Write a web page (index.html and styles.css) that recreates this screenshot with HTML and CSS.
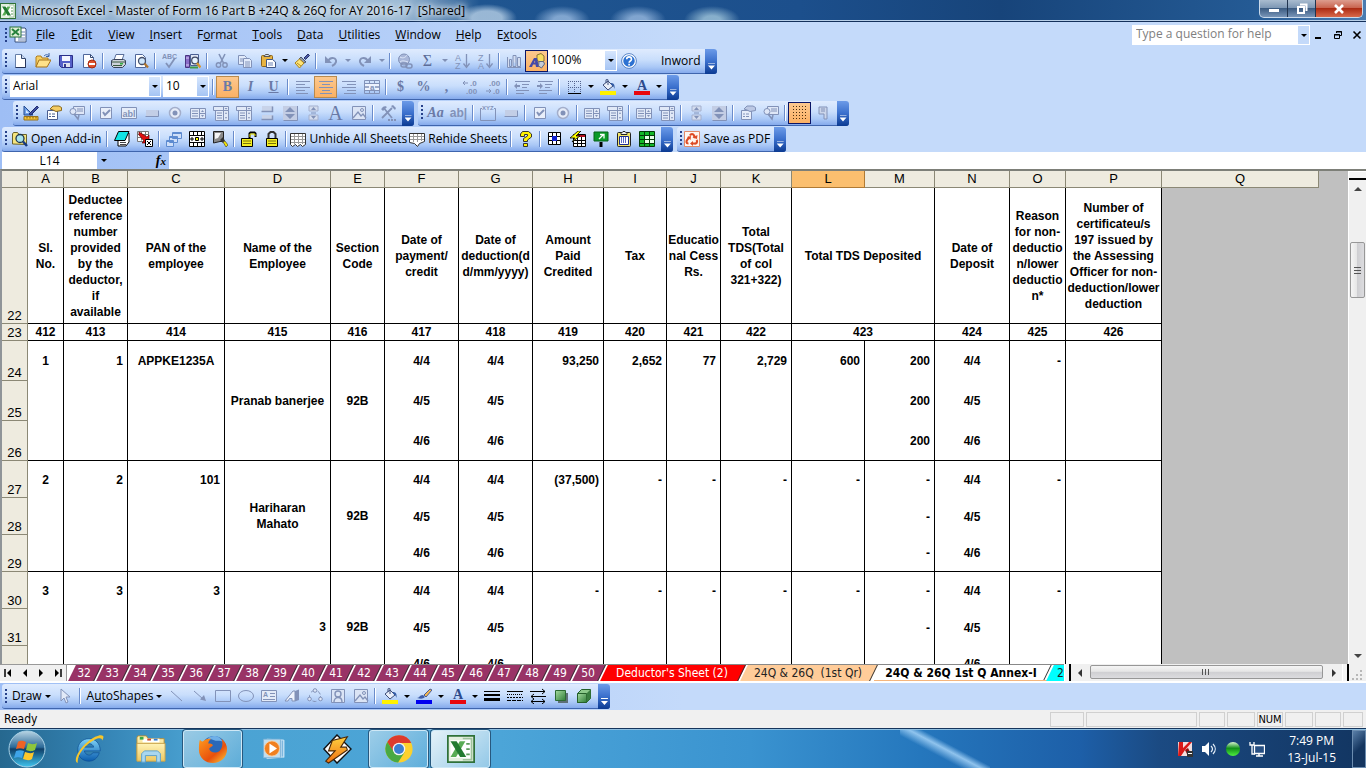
FILE: index.html
```
<!DOCTYPE html>
<html lang="en">
<head>
	<meta charset="utf-8" />
	<meta name="viewport" content="width=device-width, initial-scale=1" />
	<link rel="stylesheet" href="styles.css">
	<title>Microsoft Excel - Master of Form 16 Part B +24Q &amp; 26Q for AY 2016-17</title>
</head>
<body>
<!-- gradients -->
<svg class="grads" aria-hidden="true">
	<defs>
		<linearGradient id="g-ball" x1="0" y1="0" x2="0" y2="1"><stop offset="0" stop-color="#b8d4e4"/><stop offset=".45" stop-color="#2c6a98"/><stop offset=".5" stop-color="#0f3f68"/><stop offset="1" stop-color="#3fc4ee"/></linearGradient>
		<linearGradient id="g-fold" x1="0" y1="0" x2="0" y2="1"><stop offset="0" stop-color="#fff3b8"/><stop offset="1" stop-color="#eec860"/></linearGradient>
		<linearGradient id="g-green" x1="0" y1="0" x2="1" y2="1"><stop offset="0" stop-color="#a6dca0"/><stop offset="1" stop-color="#2f7d38"/></linearGradient>
		<linearGradient id="g-fox" x1="0" y1="0" x2="1" y2="1"><stop offset="0" stop-color="#ff9a1e"/><stop offset=".6" stop-color="#e8500c"/><stop offset="1" stop-color="#ffcf3a"/></linearGradient>
		<linearGradient id="g-ie" x1="0" y1="0" x2="0" y2="1"><stop offset="0" stop-color="#7fd4f8"/><stop offset="1" stop-color="#0a5cae"/></linearGradient>
		<linearGradient id="g-bolt" x1="0" y1="0" x2="0" y2="1"><stop offset="0" stop-color="#ffd040"/><stop offset="1" stop-color="#f07010"/></linearGradient>
		<linearGradient id="g-dot" x1="0" y1="0" x2="0" y2="1"><stop offset="0" stop-color="#d8f4d0"/><stop offset=".45" stop-color="#109018"/><stop offset="1" stop-color="#50f040"/></linearGradient>
	</defs>
</svg>
<!-- icon sprite -->
<svg class="sprite" aria-hidden="true">
	<symbol id="xl" viewBox="0 0 16 16"><rect x=".5" y=".5" width="15" height="15" fill="#e4efdf" stroke="#2f7138"/><path d="M9 2h5v12H9" fill="#fff" stroke="#9fc39d"/><path d="M10 5h3M10 8h3M10 11h3" stroke="#5d9c5c"/><rect x="2" y="3" width="9" height="10" fill="#fff"/><path d="M10.500 3.500H7.300L2 12.500h3.200z" fill="#5aac55"/><path d="M2 3.500h3.500l5.500 9H7.500z" fill="#237a31"/></symbol>
	<symbol id="xldoc" viewBox="0 0 18 18"><path d="M7 2h9l1 1v13H6V3z" fill="#fff" stroke="#39507d"/><path d="M12 6h4M12 9h4M9 12h7M9 14h7" stroke="#6b84b5"/><rect x="1" y="1" width="11" height="10" fill="#dff0d8" stroke="#28733a"/><path d="M3 3l7 6M10 3L3 9" stroke="#26823b" stroke-width="2"/></symbol>
	<symbol id="new" viewBox="0 0 16 16"><path d="M3.500 1.500h6l4 4v9h-10z" fill="#fff" stroke="#667fa8"/><path d="M9.500 1.500v4h4" fill="#cfdcf2" stroke="#33476e"/><path d="M13.500 6v8.500h-10" fill="none" stroke="#26355c"/></symbol>
	<symbol id="open" viewBox="0 0 16 16"><path d="M1 14V4l1-1h4l1 2h6v3" fill="#f5cf63" stroke="#b17d1c"/><path d="M1 14l3-7h12l-4 7z" fill="#ffe28a" stroke="#a5721a"/><path d="M9 3c2-2 4-1.500 5 0M14 0v3.500h-3" fill="none" stroke="#3a62a8"/></symbol>
	<symbol id="save" viewBox="0 0 16 16"><path d="M1.500 2.500h13v12h-11l-2-2z" fill="#5560c8" stroke="#2b2f88"/><rect x="4" y="3" width="8" height="5" fill="#f4f6ff"/><rect x="5" y="10" width="7" height="4" fill="#e0e3ee"/><rect x="6" y="11" width="2" height="3" fill="#333a8f"/></symbol>
	<symbol id="perm" viewBox="0 0 16 16"><path d="M2.500 1.500h7l3 3v10h-10z" fill="#fff" stroke="#4f679a"/><path d="M9.500 1.500v3h3" fill="none" stroke="#33476e"/><circle cx="11" cy="11" r="4" fill="#e0522c" stroke="#a52b10"/><rect x="8" y="10" width="6" height="2" fill="#fff"/></symbol>
	<symbol id="print" viewBox="0 0 16 16"><path d="M4 7l2-5.500h8L12 7" fill="#fff" stroke="#5a6f9a"/><path d="M1.500 7.500l2-1h10l2 1v4l-3 3h-9l-2-2z" fill="#cdd2da" stroke="#39435a"/><path d="M2 9h13M3 12.500h9" stroke="#3a5a40"/><rect x="10" y="10" width="3" height="1.500" fill="#37b043"/></symbol>
	<symbol id="preview" viewBox="0 0 16 16"><path d="M2.500 1.500h7l3 3v10h-10z" fill="#fff" stroke="#4f679a"/><circle cx="9" cy="8" r="3.500" fill="#cfe6fb" stroke="#44506c" stroke-width="1.300"/><path d="M11.500 10.500l3.500 4" stroke="#b0752d" stroke-width="2.200"/></symbol>
	<symbol id="spell" viewBox="0 0 16 16"><text x="0" y="6" font-size="7" font-weight="bold" fill="currentColor">ABC</text><path d="M4 10l3 4 6-9" fill="none" stroke="currentColor" stroke-width="1.800"/></symbol>
	<symbol id="research" viewBox="0 0 16 16"><path d="M5.500 1.500h8v11h-8z" fill="#dfe6f4" stroke="#4a5f92"/><path d="M.5 2.500h4v12h-4z" fill="#8a6cc8" stroke="#493580"/><path d="M1 5h3M1 12h3" stroke="#d8ccf2"/><path d="M5 14.500h8" stroke="#3f9a48" stroke-width="2"/><circle cx="10" cy="7.500" r="3.300" fill="#e8f4ff" stroke="#3f4862" stroke-width="1.200"/><path d="M12 10l3.500 4.500" stroke="#d8962c" stroke-width="2.400"/></symbol>
	<symbol id="cut" viewBox="0 0 16 16"><path d="M5 1l4.500 9M11 1L6.500 10" stroke="currentColor" stroke-width="1.600"/><circle cx="4.500" cy="12" r="2.200" fill="none" stroke="currentColor" stroke-width="1.400"/><circle cx="11" cy="12" r="2.200" fill="none" stroke="currentColor" stroke-width="1.400"/></symbol>
	<symbol id="copy" viewBox="0 0 16 16"><path d="M1.500 2.500h6l2 2v7h-8z" fill="#e2ebfb" stroke="currentColor"/><path d="M6.500 5.500h6l2 2v7h-8z" fill="#e2ebfb" stroke="currentColor"/><path d="M3 6h3M3 8h3M8 9h5M8 11h5M8 13h5" stroke="currentColor"/></symbol>
	<symbol id="paste" viewBox="0 0 16 16"><rect x="1.500" y="2.500" width="11" height="11" rx="1" fill="#e8b442" stroke="#8a641c"/><path d="M4 3.500l1.500-2h3l1.500 2z" fill="#dfe3ea" stroke="#555"/><path d="M6.500 6.500h6l3 2.500v5.500h-9z" fill="#fff" stroke="#3f5686"/><path d="M8 10h5M8 12h5" stroke="#6b82b5"/></symbol>
	<symbol id="brush" viewBox="0 0 16 16"><path d="M10 5l4-4 1.500 1.500-4 4z" fill="#4a5aa8" stroke="#2a3266"/><path d="M7 4l5 5-2 1-5-4z" fill="#8d96a8" stroke="#4b5366"/><path d="M5.500 6l4.500 4-4.500 5L1 10z" fill="#ffe477" stroke="#a8821b"/><path d="M3 10l4 3" stroke="#b58f22"/></symbol>
	<symbol id="undo" viewBox="0 0 16 16"><path d="M5 8c3-5 9-3 8 1-.5 2-2 3-4 4" fill="none" stroke="currentColor" stroke-width="2"/><path d="M2 3v7h7z" fill="currentColor"/></symbol>
	<symbol id="redo" viewBox="0 0 16 16"><path d="M11 8C8 3 2 5 3 9c.5 2 2 3 4 4" fill="none" stroke="currentColor" stroke-width="2"/><path d="M14 3v7H7z" fill="currentColor"/></symbol>
	<symbol id="link" viewBox="0 0 16 16"><circle cx="7" cy="6.500" r="5.500" fill="#a9b7d9" stroke="currentColor"/><path d="M3 4c3 2 6 0 7-2M3 9c2-2 5-1 8 0" fill="none" stroke="#dfe8fa"/><rect x="4" y="10" width="6" height="4" rx="2" fill="none" stroke="currentColor" stroke-width="1.500"/><rect x="9" y="11" width="6" height="4" rx="2" fill="none" stroke="currentColor" stroke-width="1.500"/></symbol>
	<symbol id="az" viewBox="0 0 16 16"><text x="1" y="8" font-size="9" fill="currentColor">A</text><text x="1" y="16" font-size="9" fill="currentColor">Z</text><path d="M12.500 1v12M9.500 10.500l3 4 3-4" fill="none" stroke="currentColor" stroke-width="1.300"/></symbol>
	<symbol id="za" viewBox="0 0 16 16"><text x="1" y="8" font-size="9" fill="currentColor">Z</text><text x="1" y="16" font-size="9" fill="currentColor">A</text><path d="M12.500 1v12M9.500 10.500l3 4 3-4" fill="none" stroke="currentColor" stroke-width="1.300"/></symbol>
	<symbol id="chart" viewBox="0 0 16 16"><path d="M1.500 4v10.500H15M3.500 6.500h2v7h-2zM7 2.500h3v11H7zM11.500 4.500h3v9h-3z" fill="#d4def2" stroke="currentColor"/></symbol>
	<symbol id="shapes" viewBox="0 0 16 16"><path d="M8 2l4-1.500L15 3v5l-4 1.500L8 7z" fill="#f8de60" stroke="#8a7430"/><path d="M0 14L5 5h3l2 9H7l-.5-2.500H4L3 14zM5 9.500h1.200L6 7.500z" fill="#4549a8"/><path d="M10 8.500h4.500l1 2.500-3 4-3-2z" fill="#c6ccd8" stroke="#5d6680"/></symbol>
	<symbol id="help" viewBox="0 0 16 16"><circle cx="8" cy="8" r="6.500" fill="#2d72d2" stroke="#fff" stroke-width="1.500"/><circle cx="8" cy="8" r="7.400" fill="none" stroke="#3b6dba" stroke-width=".8"/><path d="M5.700 6.300c0-3.200 4.800-3.200 4.800 0 0 1.700-2.400 1.700-2.400 3.500M8.100 10.800v1.700" fill="none" stroke="#fff" stroke-width="1.600"/></symbol>
	<symbol id="al" viewBox="0 0 16 16"><path d="M1 2.500h14M1 5.500h9M1 8.500h14M1 11.500h9M1 14.500h12" stroke="currentColor"/></symbol>
	<symbol id="ac" viewBox="0 0 16 16"><path d="M1 2.500h14M4 5.500h8M1 8.500h14M4 11.500h8M2 14.500h12" stroke="currentColor"/></symbol>
	<symbol id="ar" viewBox="0 0 16 16"><path d="M1 2.500h14M6 5.500h9M1 8.500h14M6 11.500h9M3 14.500h12" stroke="currentColor"/></symbol>
	<symbol id="merge" viewBox="0 0 16 16"><path d="M.5 1.500h15v13H.5zM.5 4.500h15M.5 11.500h15M5.500 1.500v3M10.500 1.500v3M5.500 11.500v3M10.500 11.500v3" fill="none" stroke="currentColor"/><path d="M1 5h14v6H1z" fill="#eef3fd"/><text x="6" y="10.500" font-size="8" font-weight="bold" fill="currentColor">a</text><path d="M1 8h4M11 8h4" stroke="currentColor" stroke-width="1.500"/></symbol>
	<symbol id="incdec" viewBox="0 0 16 16"><text x="8" y="7" font-size="8" font-weight="bold" fill="currentColor">.0</text><text x="4" y="15" font-size="8" font-weight="bold" fill="currentColor">.00</text><path d="M1 4h5M3 2L1 4l2 2" fill="none" stroke="currentColor"/></symbol>
	<symbol id="decdec" viewBox="0 0 16 16"><text x="4" y="7" font-size="8" font-weight="bold" fill="currentColor">.00</text><text x="8" y="15" font-size="8" font-weight="bold" fill="currentColor">.0</text><path d="M1 12h5M4 10l2 2-2 2" fill="none" stroke="currentColor"/></symbol>
	<symbol id="outd" viewBox="0 0 16 16"><path d="M1 2.500h15M8 5.500h7M8 8.500h5M2 11.500h13M2 14.500h8" stroke="currentColor"/><path d="M0 7l3-3v2h3v2H3v2z" fill="currentColor"/></symbol>
	<symbol id="ind" viewBox="0 0 16 16"><path d="M1 2.500h15M8 5.500h7M8 8.500h5M2 11.500h13M2 14.500h8" stroke="currentColor"/><path d="M6 7L3 4v2H0v2h3v2z" fill="currentColor"/></symbol>
	<symbol id="border" viewBox="0 0 16 16"><path d="M2.500 2v12M8.500 2v12M14.500 2v12M2 2.500h13M2 8.500h13" stroke="#54648f" stroke-dasharray="1 1"/><path d="M2 14.500h13" stroke="#000"/></symbol>
	<symbol id="fill" viewBox="0 0 16 16"><path d="M3 6l5-4 5 5-5 4z" fill="#e9eff9" stroke="#3d4d78"/><path d="M8 6V1c0-1-2-1-2 0v3" fill="none" stroke="#3d4d78"/><path d="M11 4c3 0 4 2 3.500 6-1-3-2-4-3.500-4z" fill="#365fa8"/><path d="M0 12h16v4H0z" fill="#fff200"/></symbol>
	<symbol id="fcolor" viewBox="0 0 16 16"><text x="8" y="11" text-anchor="middle" font-family="Liberation Serif" font-size="14" font-weight="bold" fill="#2d4a8c">A</text><path d="M0 12h16v4H0z" fill="#e8060e"/></symbol>
	<symbol id="lcolor" viewBox="0 0 16 16"><path d="M1 10c3 0 2-3 6-3l2 2c-2 2-4 2-8 1z" fill="#3f5ea8"/><path d="M8 7l6-6 2 1-6 7z" fill="#f3b74e" stroke="#4a5a90"/><path d="M0 12h16v4H0z" fill="#0000f0"/></symbol>
	<symbol id="design" viewBox="0 0 16 16"><path d="M1 1v9h9z" fill="#6fa0e8" stroke="#244a90"/><path d="M3 5v3h3z" fill="#dcebff"/><path d="M1 11.500h14v3.500H1z" fill="#f6c437" stroke="#96701a"/><path d="M4 12v1.500M7 12v1.500M10 12v1.500M13 12v1.500" stroke="#7b5a12"/><path d="M6 9l8-8 1.500 1.500L8 10z" fill="#3b4ca0" stroke="#252f6e"/></symbol>
	<symbol id="prop" viewBox="0 0 16 16"><path d="M1.500 5.500h10v9h-10z" fill="#fff" stroke="#4b5e90"/><path d="M3 9h2M6 9h3M3 11.500h2M6 11.500h3" stroke="#4b5e90"/><path d="M4 4l3-3h6l2.500 1.500v3L10 6.500 7 5z" fill="#f5cc62" stroke="#8a6a22"/></symbol>
	<symbol id="propoff" viewBox="0 0 16 16"><path d="M1.500 5.500h10v9h-10z" fill="#e7edf9" stroke="currentColor"/><path d="M3 9h2M6 9h3M3 11.500h2M6 11.500h3" stroke="currentColor"/><path d="M4 4l3-3h6l2.500 1.500v3L10 6.500 7 5z" fill="#bcc8e4" stroke="currentColor"/></symbol>
	<symbol id="code" viewBox="0 0 16 16"><path d="M4.500 1.500h11v8h-11z" fill="#dfe7f7" stroke="currentColor"/><path d="M8 4h6M8 6h6" stroke="currentColor"/><circle cx="4" cy="6.500" r="3" fill="#dfe7f7" stroke="currentColor"/><path d="M5 9l4 5 1-4" fill="none" stroke="currentColor" stroke-width="1.500"/></symbol>
	<symbol id="check" viewBox="0 0 16 16"><path d="M2.500 2.500h11v11h-11z" fill="#e9effa" stroke="currentColor"/><path d="M5 7l2 3 5-5" fill="none" stroke="currentColor" stroke-width="2"/></symbol>
	<symbol id="abl" viewBox="0 0 16 16"><path d="M.5 2.500h15v11H.5z" fill="#e6edf9" stroke="currentColor"/><text x="1.500" y="11.500" font-size="9" font-weight="bold" fill="currentColor">abl</text></symbol>
	<symbol id="cmd" viewBox="0 0 16 16"><path d="M2 5h12v6H2z" fill="#c3cee6"/><path d="M1.500 11.500h13v-6" fill="none" stroke="currentColor"/></symbol>
	<symbol id="radio" viewBox="0 0 16 16"><circle cx="8" cy="8" r="5.500" fill="#e6ecf8" stroke="#a3aecb" stroke-width="1.500"/><circle cx="8" cy="8" r="2.500" fill="currentColor"/></symbol>
	<symbol id="list" viewBox="0 0 16 16"><path d="M.5 3.500h15v10H.5zM9.500 3.500v10M9.500 8.500h6" fill="#e1e9f7" stroke="currentColor"/><path d="M2 6h6M2 8.500h6M2 11h6" stroke="currentColor"/><path d="M11 7l1.500-2L14 7zM11 10l1.500 2 1.500-2z" fill="currentColor"/></symbol>
	<symbol id="combo" viewBox="0 0 16 16"><path d="M.5 1.500h15v4H.5zM2.500 5.500h13v10h-13zM10.500 5.500v10M10.500 1.500v4" fill="#e1e9f7" stroke="currentColor"/><path d="M4 8h5M4 10.500h5M4 13h5" stroke="currentColor"/><path d="M11.500 3h3L13 4.500zM12 9l1-2 1 2zM12 12l1 2 1-2z" fill="currentColor"/></symbol>
	<symbol id="toggle" viewBox="0 0 16 16"><path d="M3 1h11v5H3zM3 10h11v4H3z" fill="#c8d3e9"/><path d="M2.500 6.500h11v-5M2.500 14.500h11v-4" fill="none" stroke="currentColor" stroke-width="1.500"/></symbol>
	<symbol id="spin" viewBox="0 0 16 16"><path d="M1 1h14v14H1z" fill="#c3cde4"/><path d="M8 2l5 5H3zM8 14l5-5H3z" fill="currentColor"/><path d="M1.500 15.500h14V1" stroke="currentColor" fill="none"/></symbol>
	<symbol id="scroll" viewBox="0 0 16 16"><path d="M4 1h9v5H4zM4 10h9v5H4z" fill="#d3dcee" stroke="#a4b0ce"/><path d="M8.500 2l2.500 3H6zM8.500 14l2.500-3H6z" fill="currentColor"/><path d="M6 8h5" stroke="currentColor"/></symbol>
	<symbol id="pic" viewBox="0 0 16 16"><path d="M1.500 1.500h13v13h-13z" fill="#dbe4f5" stroke="currentColor"/><path d="M2 13l5-6 3 4 2-2 3 4" fill="none" stroke="currentColor" stroke-width="1.300"/><circle cx="11" cy="5" r="1.500" fill="none" stroke="currentColor"/></symbol>
	<symbol id="tools" viewBox="0 0 16 16"><path d="M2 13L12 3M3 2l9 11" fill="none" stroke="currentColor" stroke-width="1.800"/><path d="M1 4l4-3 2 1-4 4zM11 1l4 4 1-2-3-3z" fill="currentColor"/><path d="M8 15h2M11 15h2M14 15h2" stroke="currentColor" stroke-width="2"/></symbol>
	<symbol id="xyz" viewBox="0 0 16 16"><path d="M2 3.500H.5v12h15v-12H14" fill="none" stroke="currentColor"/><text x="2" y="5" font-size="6" font-weight="bold" fill="currentColor">XYZ</text></symbol>
	<symbol id="dots" viewBox="0 0 16 16"><path d="M1.500 1v14M4.500 1v14M7.500 1v14M10.500 1v14M13.500 1v14" stroke="#4a2f10" stroke-dasharray="1 2"/></symbol>
	<symbol id="run" viewBox="0 0 16 16"><path d="M4 2h8v12H9V9H4z" fill="#cbd5ea" stroke="currentColor"/><path d="M6 4h4M6 6h4" stroke="currentColor"/></symbol>
	<symbol id="addin" viewBox="0 0 16 16"><path d="M.5 13V3l1-1.500h4L7 3.500h7.500v10z" fill="#f5e57e" stroke="#68622c"/><circle cx="8" cy="7.500" r="4" fill="#a8e4ee" stroke="#1f3550" stroke-width="1.300"/><path d="M11 10.500l4 4.500" stroke="#173a80" stroke-width="2.500"/></symbol>
	<symbol id="book" viewBox="0 0 16 16"><path d="M5 6l10-4v9l-3 4H4v-5z" fill="#fff" stroke="#000"/><path d="M6 11.500h6M6 13.500h6" stroke="#444"/><path d="M4.500.5h10.500L11 9.500H.5z" fill="#10e4e4" stroke="#000"/></symbol>
	<symbol id="goto" viewBox="0 0 16 16"><path d="M.5.500h11v10H.5zM4.500.5v9M8.500.5v9M.5 3.500h11M.5 6.500h11" fill="#fff" stroke="#777"/><path d="M2 1l8 5 2-2v8H5l2-2-5-6z" fill="#e01010" stroke="#600" stroke-width=".7"/><path d="M8.500 8.500h7v7h-7z" fill="#fff" stroke="#000"/><path d="M10 10l4 4M14 10l-4 4" stroke="#000"/></symbol>
	<symbol id="wins" viewBox="0 0 16 16"><path d="M6.500 1.500h9v6h-9zM3.500 5.500h8v6h-8zM.5 9.500h7v6h-7z" fill="#cfdff8" stroke="#5d8bd0"/><path d="M6 2.500h9M3 6.500h8M1 10.500h7" stroke="#5d8bd0"/></symbol>
	<symbol id="autofit" viewBox="0 0 16 16"><path d="M.5.5h15v15H.5zM.5 4.500h15M.5 11.500h15M4.500.5v4M8.500.5v4M12.500.5v4M4.500 11.500v4M8.500 11.500v4M12.500 11.500v4" fill="#fff" stroke="#000"/><path d="M6.500 6.500h3v3h-3z" fill="#ff0" stroke="#000"/><path d="M1 8h4M11 8h4M3 6v4M13 6v4" stroke="#000"/></symbol>
	<symbol id="torch" viewBox="0 0 16 16"><path d="M1.500.5h10v10H8L1.500 12z" fill="#8a8a8a" stroke="#222"/><path d="M3 2l6 0-3 5-3 1z" fill="#f4f4f4"/><path d="M8 9l3-3 2 4-2 2z" fill="#333"/><path d="M11 11l2-1 3 4-2 2z" fill="#f5e400" stroke="#333" stroke-width=".6"/></symbol>
	<symbol id="unlock" viewBox="0 0 16 16"><path d="M8.500 7V2.500l1-1h4l1 1V6" fill="none" stroke="#000" stroke-width="2"/><path d="M9 6V3h5v2" fill="none" stroke="#e8e200"/><path d="M.5 7.500h11v8H.5z" fill="#f4ee20" stroke="#000"/><path d="M2 10h8M2 12.500h8" stroke="#77720a"/></symbol>
	<symbol id="lock" viewBox="0 0 16 16"><path d="M4.500 7V3l2-2h3l2 2v4" fill="none" stroke="#333" stroke-width="2"/><path d="M2.500 7.500h11v8h-11z" fill="#f4ee20" stroke="#000"/><path d="M4 10h8M4 12.500h8" stroke="#77720a"/></symbol>
	<symbol id="sheet" viewBox="0 0 16 16"><path d="M.5 2.500h15v11l-3 2-2-2-3 2-2-2-3 2-2-2z" fill="#fff" stroke="#333"/><path d="M4.500 3v10M8.500 3v10M12.500 3v10M1 5.500h14M1 8.500h14M1 11.500h14" stroke="#999"/></symbol>
	<symbol id="sheet2" viewBox="0 0 16 16"><path d="M.5 2.500h15v8l-5 2-2 3-3-3-5-1z" fill="#fff" stroke="#333"/><path d="M4.500 3v8M8.500 3v8M12.500 3v7M1 5.500h14M1 8.500h14" stroke="#999"/></symbol>
	<symbol id="qm" viewBox="0 0 16 16"><path d="M2.500 5.500V3l2-2.500h6l3 2.500v3L9.500 9v1.500h-4v-3l4-2.500V3.500h-3v2z" fill="#fff200" stroke="#333"/><path d="M5.500 12.500h4v3h-4z" fill="#fff200" stroke="#333"/></symbol>
	<symbol id="cell" viewBox="0 0 16 16"><path d="M1.500 1.500h12v12h-12zM5.500 1.500v12M9.500 1.500v12M1.500 5.500h12M1.500 9.500h12" fill="#fff" stroke="#000"/><path d="M5 5h5v5H5z" fill="#1020d0"/></symbol>
	<symbol id="qgrid" viewBox="0 0 16 16"><path d="M3.500 3.500h12v12h-12z" fill="#fff" stroke="#000"/><path d="M4 4h11v2H4z" fill="#b01020"/><path d="M7.500 6v9M11.500 6v9M4 9.500h11M4 12.500h11" stroke="#000"/><path d="M8 0L0 7h5l-3 4 8-6H6l5-5z" fill="#ff0" stroke="#000" stroke-width=".8"/></symbol>
	<symbol id="sign" viewBox="0 0 16 16"><path d="M1 1h14v9H1z" fill="#0a9a28" stroke="#066018"/><path d="M6 8l4-4M7 3.500h4v4" stroke="#fff" fill="none" stroke-width="1.300"/><path d="M8 11v5" stroke="#000" stroke-width="3"/></symbol>
	<symbol id="clip" viewBox="0 0 16 16"><rect x="1.500" y="1.500" width="13" height="14" rx="1" fill="#f4e66a" stroke="#222"/><path d="M5 2.500L7 .5h2l2 2v1H5z" fill="#eee" stroke="#222"/><path d="M3.500 5.500h9v8h-9z" fill="#fff" stroke="#1a2a90"/><path d="M5 7h6M5 9h6M5 11h6" stroke="#2438b0" stroke-dasharray="1 1" stroke-width="1.500"/></symbol>
	<symbol id="ggrid" viewBox="0 0 16 16"><path d="M.5.5h15v15H.5z" fill="#12b828" stroke="#033a08"/><path d="M5.500 1v14M10.500 1v14M1 4.500h14M1 8.500h14M1 12.500h14" stroke="#033a08"/><path d="M6 5h4v3H6zM11 5h4v3h-4zM6 9h4v3H6zM11 9h4v3h-4z" fill="#e8ffe8"/></symbol>
	<symbol id="pdf" viewBox="0 0 16 16"><path d="M.5.5h15v15H.5z" fill="#fff6f0" stroke="#e38a68"/><path d="M6 4.500c1-2 3-2 4 0l1 2.500M12.500 9c1.500 2 0 4-2 3.500H8M4.500 12.500C2 12.500 2 10 3.500 8.500L5.500 6" fill="none" stroke="#dd4b25" stroke-width="2.200"/><path d="M8.500 6.500l4.500 1.500.500-4zM9 10v5l-3-2.500zM3 6l4-1-.500 4z" fill="#dd4b25"/></symbol>
	<symbol id="ptr" viewBox="0 0 16 16"><path d="M4 1v12l3-3 2 5 2-1-2-5h4z" fill="#e2eaf8" stroke="currentColor"/></symbol>
	<symbol id="line" viewBox="0 0 16 16"><path d="M2 3l11 10" stroke="currentColor"/></symbol>
	<symbol id="arrow" viewBox="0 0 16 16"><path d="M2 3l9 8" stroke="currentColor"/><path d="M14 13l-6-1.500L12 7z" fill="currentColor"/></symbol>
	<symbol id="rect" viewBox="0 0 16 16"><path d="M.5 2.500h15v11H.5z" fill="none" stroke="currentColor"/></symbol>
	<symbol id="oval" viewBox="0 0 16 16"><ellipse cx="8" cy="8" rx="7.500" ry="5.500" fill="none" stroke="currentColor"/></symbol>
	<symbol id="tbox" viewBox="0 0 16 16"><path d="M.5 2.500h15v11H.5z" fill="#e4ebf8" stroke="currentColor"/><text x="2" y="9" font-size="7" font-weight="bold" fill="currentColor">A</text><path d="M9 5.500h5M9 8.500h5M2 11.500h12" stroke="currentColor"/></symbol>
	<symbol id="wart" viewBox="0 0 16 16"><path d="M1 13L9 3h2v10H8v-2.500H5.500L4 13z" fill="#eef3fc" stroke="currentColor"/><path d="M11 3l4-1.500V12l-4 1.500z" fill="currentColor"/></symbol>
	<symbol id="diag" viewBox="0 0 16 16"><circle cx="8" cy="8" r="5.500" fill="none" stroke="currentColor" stroke-dasharray="4 3"/><circle cx="8" cy="2.500" r="1.800" fill="#dfe8f8" stroke="currentColor"/><circle cx="2.500" cy="11" r="1.800" fill="#dfe8f8" stroke="currentColor"/><circle cx="13.500" cy="11" r="1.800" fill="#dfe8f8" stroke="currentColor"/></symbol>
	<symbol id="clipart" viewBox="0 0 16 16"><path d="M1.500 1.500h13v13h-13z" fill="#dbe4f5" stroke="currentColor"/><circle cx="8" cy="6" r="3" fill="none" stroke="currentColor" stroke-width="1.400"/><path d="M4 14c0-6 8-6 8 0" fill="none" stroke="currentColor" stroke-width="1.400"/></symbol>
	<symbol id="lw" viewBox="0 0 16 16"><path d="M0 3.500h16" stroke="#000" stroke-width="1"/><path d="M0 7h16" stroke="#000" stroke-width="2"/><path d="M0 11.500h16" stroke="#000" stroke-width="3"/></symbol>
	<symbol id="dash" viewBox="0 0 16 16"><path d="M0 3.500h16" stroke="#000"/><path d="M0 6.500h16" stroke="#000" stroke-dasharray="1 1"/><path d="M0 9.500h16" stroke="#000" stroke-dasharray="2 1"/><path d="M0 12.500h16" stroke="#000" stroke-dasharray="4 1"/></symbol>
	<symbol id="arrows" viewBox="0 0 16 16"><path d="M0 3.500h15M12 1l3 2.500L12 6M1 8.500h15M4 6L1 8.500 4 11M1 13.500h14M4 11l-3 2.500L4 16M12 11l3 2.500L12 16" fill="none" stroke="#000"/></symbol>
	<symbol id="shadow" viewBox="0 0 16 16"><path d="M5 5h10v10H5z" fill="#5d6f77"/><path d="M2.500 2.500h10v10h-10z" fill="url(#g-green)" stroke="#2c6a32"/></symbol>
	<symbol id="cube" viewBox="0 0 16 16"><path d="M1.500 5.500l4-4h9v9l-4 4h-9z" fill="#8cc98a" stroke="#25602b"/><path d="M1.500 5.500h9v9h-9z" fill="url(#g-green)" stroke="#25602b"/><path d="M10.500 5.500l4-4v9l-4 4z" fill="#3a7f3f"/></symbol>
	<!-- taskbar -->
	<symbol id="start" viewBox="0 0 38 38"><circle cx="19" cy="19" r="18" fill="url(#g-ball)" stroke="#a9d2e6"/><path d="M10 12c3-2 5-1 8 0l-2 7c-3-1-5-1-8 0z" fill="#ee6325"/><path d="M20 13c3 1 5 2 9 0l-2 7c-4 2-6 1-9 0z" fill="#8ec63c"/><path d="M8 21c3-1 5-1 8 0l-2 7c-3-1-5-1-8 0z" fill="#3ea4e8"/><path d="M17 22c3 1 6 2 9 0l-2 7c-3 2-6 1-9 0z" fill="#fdc72b"/></symbol>
	<symbol id="ie" viewBox="0 0 32 32"><path d="M16 5c7 0 12 5 12 13H11c1 5 7 6 9 2h7c-2 6-6 9-11 9C9 29 4 24 4 17S9 5 16 5zm-5 9h10c-1-5-9-5-10 0z" fill="url(#g-ie)" stroke="#0b4d94" stroke-width=".7"/><path d="M4 31C-2 29 6 15 15 8c7-6 14-8 16-6 1 1 0 3-1 5 0-3-3-3-8-1C12 11 3 22 4 31z" fill="#f6c62c"/></symbol>
	<symbol id="expl" viewBox="0 0 32 32"><path d="M1 4l1-2h9l2 3h17v23H1z" fill="url(#g-fold)" stroke="#b58f36"/><path d="M7 5h18v4H7z" fill="#fff"/><path d="M4 3h4v3H4z" fill="#38a846"/><path d="M12 5h4v2h-4z" fill="#d04a30"/><path d="M19 5h4v2h-4z" fill="#3880d0"/><path d="M1 10h30v19H1z" fill="url(#g-fold)" stroke="#c8a24a"/><path d="M6 30v-9l3-3h14l3 3v9h-4v-7H10v7z" fill="#a9d7f0" stroke="#5ba0cc"/></symbol>
	<symbol id="fox" viewBox="0 0 32 32"><circle cx="17" cy="15" r="13" fill="#2a68b8"/><path d="M10 5c5-5 14-3 16 3-3-2-6 0-8-1s-5-2-8-2z" fill="#6fb0e8"/><path d="M2 6c1 1 2 2 3 2 3-3 6-3 9-3-2 2-3 3-3 5 2 0 4 0 5 2-1 2-4 2-4 4 1 4 7 5 11 2 3-3 4-8 2-13 4 3 6 7 6 11 0 9-7 15-15 15S1 25 1 17c0-4 0-8 1-11z" fill="url(#g-fox)"/></symbol>
	<symbol id="wmp" viewBox="0 0 32 32"><path d="M7 5l20 1v20L7 28z" fill="#7db6de" stroke="#d6edfa"/><path d="M24 6v20M27 6v21" stroke="#c9e4f6"/><path d="M3 5h20v22H3z" fill="#c0def0" stroke="#7eb2d6"/><circle cx="13" cy="16" r="9" fill="#f08020" stroke="#fbd0a0"/><path d="M10 10l9 6-9 6z" fill="#fff"/></symbol>
	<symbol id="amp" viewBox="0 0 32 32"><path d="M16 1l15 15-15 15L2 16z" fill="#fff" stroke="#111" stroke-width="1.500"/><path d="M27 3L11 7 7 18h7L4 29l3 2 20-14-1-3h-6z" fill="url(#g-bolt)" stroke="#4a2808" stroke-width="1.200"/></symbol>
	<symbol id="chrome" viewBox="0 0 32 32"><circle cx="16" cy="16" r="14.500" fill="#fcd12c"/><path d="M3.500 8.500A14.500 14.500 0 0 1 29 9.500H16l-6.500 9z" fill="#dd3b2c"/><path d="M3.500 8.500A14.500 14.500 0 0 0 15 30.500l7-11-12-1z" fill="#49a942"/><circle cx="16" cy="16" r="6.700" fill="#f3f3f3"/><circle cx="16" cy="16" r="5.300" fill="#3c7fd0"/></symbol>
	<symbol id="kas" viewBox="0 0 16 16"><path d="M1 1h14v14H1z" fill="#f3dede"/><path d="M2 1h4v6l6-6h3L8 9l-4 6H1z" fill="#d81818"/><path d="M8 9l3-2 4 8H11z" fill="#901010"/><path d="M10 10h6v6h-6z" fill="#333"/><path d="M11 12h4v1h-4z" fill="#fff"/></symbol>
	<symbol id="vol" viewBox="0 0 16 16"><path d="M1 5h3l4-4v14l-4-4H1z" fill="#fff"/><path d="M10 5c2 2 2 4 0 6M12 3c3 3 3 7 0 10" fill="none" stroke="#e4eef8" stroke-width="1.200"/></symbol>
	<symbol id="gdot" viewBox="0 0 16 16"><circle cx="8" cy="8" r="7" fill="url(#g-dot)"/></symbol>
	<symbol id="net" viewBox="0 0 16 16"><path d="M5.500 4.500h10v8h-10z" fill="#274f82" stroke="#fff" stroke-width="1.300"/><path d="M7 15h7M10 13v2" stroke="#fff" stroke-width="1.500"/><path d="M1 1v3h4V1M3 4v9h3" fill="none" stroke="#fff" stroke-width="1.300"/></symbol>
</svg>

<div class="app">
	<!-- title bar -->
	<div class="title">
		<svg class="ico"><use href="#xl"/></svg>
		<h1>Microsoft Excel - Master of Form 16 Part B +24Q &amp; 26Q for AY 2016-17 &nbsp;[Shared]</h1>
		<div class="winbtns">
			<button type="button" class="min" aria-label="Minimize"><svg width="12" height="12"><path d="M1 6h10v3H1z" fill="#fff"/></svg></button>
			<button type="button" class="max" aria-label="Restore"><svg width="12" height="12"><path d="M4 1.500h6.500V8M2 4h6v6H2z" fill="none" stroke="#fff" stroke-width="2"/></svg></button>
			<button type="button" class="close" aria-label="Close"><svg width="12" height="12"><path d="M2 2l8 8M10 2l-8 8" stroke="#fff" stroke-width="2.600"/></svg></button>
		</div>
	</div>

	<!-- menu -->
	<div class="menu">
		<i class="grip"></i>
		<svg class="docico"><use href="#xldoc"/></svg>
		<button type="button"><u>F</u>ile</button>
		<button type="button"><u>E</u>dit</button>
		<button type="button"><u>V</u>iew</button>
		<button type="button"><u>I</u>nsert</button>
		<button type="button">F<u>o</u>rmat</button>
		<button type="button"><u>T</u>ools</button>
		<button type="button"><u>D</u>ata</button>
		<button type="button"><u>U</u>tilities</button>
		<button type="button"><u>W</u>indow</button>
		<button type="button"><u>H</u>elp</button>
		<button type="button">E<u>x</u>tools</button>
		<div class="ask">
			<input type="text" aria-label="Ask" placeholder="Type a question for help" />
			<button type="button" class="askdd" aria-label="Recent questions"></button>
		</div>
		<div class="docbtns">
			<button type="button" aria-label="Minimize workbook"><svg width="10" height="10"><path d="M1 8h6" stroke="#000" stroke-width="2"/></svg></button>
			<button type="button" aria-label="Restore workbook"><svg width="10" height="10"><path d="M3.500 3V1.500h5v4H7M1.500 4.500h5v4h-5zM1 5h6M3 2h6" fill="none" stroke="#000"/></svg></button>
			<button type="button" aria-label="Close workbook"><svg width="10" height="10"><path d="M1.500 1.500l7 7M8.500 1.500l-7 7" stroke="#000" stroke-width="1.600"/></svg></button>
		</div>
	</div>

	<!-- standard -->
	<div class="row">
		<div class="bar">
			<i class="grip"></i>
			<button type="button" class="b" aria-label="New"><svg><use href="#new"/></svg></button>
			<button type="button" class="b" aria-label="Open"><svg><use href="#open"/></svg></button>
			<button type="button" class="b" aria-label="Save"><svg><use href="#save"/></svg></button>
			<button type="button" class="b" aria-label="Permission"><svg><use href="#perm"/></svg></button>
			<i class="sep"></i>
			<button type="button" class="b" aria-label="Print"><svg><use href="#print"/></svg></button>
			<button type="button" class="b" aria-label="Print Preview"><svg><use href="#preview"/></svg></button>
			<i class="sep"></i>
			<button type="button" class="b off" aria-label="Spelling"><svg><use href="#spell"/></svg></button>
			<button type="button" class="b" aria-label="Research"><svg><use href="#research"/></svg></button>
			<i class="sep"></i>
			<button type="button" class="b off" aria-label="Cut"><svg><use href="#cut"/></svg></button>
			<button type="button" class="b off" aria-label="Copy"><svg><use href="#copy"/></svg></button>
			<button type="button" class="b" aria-label="Paste"><svg><use href="#paste"/></svg></button>
			<button type="button" class="dd" aria-label="Paste options"></button>
			<button type="button" class="b" aria-label="Format Painter"><svg><use href="#brush"/></svg></button>
			<i class="sep"></i>
			<button type="button" class="b off" aria-label="Undo"><svg><use href="#undo"/></svg></button>
			<button type="button" class="dd off" aria-label="Undo list"></button>
			<button type="button" class="b off" aria-label="Redo"><svg><use href="#redo"/></svg></button>
			<button type="button" class="dd off" aria-label="Redo list"></button>
			<i class="sep"></i>
			<button type="button" class="b off" aria-label="Hyperlink"><svg><use href="#link"/></svg></button>
			<button type="button" class="b off sigma">&Sigma;</button>
			<button type="button" class="dd off" aria-label="Functions"></button>
			<button type="button" class="b off" aria-label="Sort Ascending"><svg><use href="#az"/></svg></button>
			<button type="button" class="b off" aria-label="Sort Descending"><svg><use href="#za"/></svg></button>
			<i class="sep"></i>
			<button type="button" class="b off" aria-label="Chart Wizard"><svg><use href="#chart"/></svg></button>
			<button type="button" class="b on dark" aria-label="Drawing"><svg><use href="#shapes"/></svg></button>
			<span class="combo zoomsel"><select aria-label="Zoom"><option>100%</option></select></span>
			<button type="button" class="b" aria-label="Help"><svg><use href="#help"/></svg></button>
			<button type="button" class="txt inword">Inword</button>
			<button type="button" class="more" aria-label="Toolbar options"></button>
		</div>
	</div>

	<!-- formatting -->
	<div class="row">
		<div class="bar">
			<i class="grip"></i>
			<span class="combo fontsel"><select aria-label="Font"><option>Arial</option></select></span>
			<span class="combo sizesel"><select aria-label="Font size"><option>10</option></select></span>
			<i class="sep"></i>
			<button type="button" class="b off on ser"><b>B</b></button>
			<button type="button" class="b off ser"><em>I</em></button>
			<button type="button" class="b off ser"><u>U</u></button>
			<i class="sep"></i>
			<button type="button" class="b off" aria-label="Align Left"><svg><use href="#al"/></svg></button>
			<button type="button" class="b off on" aria-label="Center"><svg><use href="#ac"/></svg></button>
			<button type="button" class="b off" aria-label="Align Right"><svg><use href="#ar"/></svg></button>
			<button type="button" class="b off" aria-label="Merge and Center"><svg><use href="#merge"/></svg></button>
			<i class="sep"></i>
			<button type="button" class="b off ser">$</button>
			<button type="button" class="b off ser">%</button>
			<button type="button" class="b off ser">,</button>
			<button type="button" class="b off" aria-label="Increase Decimal"><svg><use href="#incdec"/></svg></button>
			<button type="button" class="b off" aria-label="Decrease Decimal"><svg><use href="#decdec"/></svg></button>
			<i class="sep"></i>
			<button type="button" class="b off" aria-label="Decrease Indent"><svg><use href="#outd"/></svg></button>
			<button type="button" class="b off" aria-label="Increase Indent"><svg><use href="#ind"/></svg></button>
			<i class="sep"></i>
			<button type="button" class="b" aria-label="Borders"><svg><use href="#border"/></svg></button>
			<button type="button" class="dd" aria-label="Border options"></button>
			<button type="button" class="b" aria-label="Fill Color"><svg><use href="#fill"/></svg></button>
			<button type="button" class="dd" aria-label="Fill options"></button>
			<button type="button" class="b" aria-label="Font Color"><svg><use href="#fcolor"/></svg></button>
			<button type="button" class="dd" aria-label="Font color options"></button>
			<button type="button" class="more" aria-label="Toolbar options"></button>
		</div>
	</div>

	<!-- control toolbox + forms -->
	<div class="row indent">
		<div class="bar">
			<i class="grip"></i>
			<button type="button" class="b" aria-label="Design Mode"><svg><use href="#design"/></svg></button>
			<button type="button" class="b" aria-label="Properties"><svg><use href="#prop"/></svg></button>
			<button type="button" class="b off" aria-label="View Code"><svg><use href="#code"/></svg></button>
			<i class="sep"></i>
			<button type="button" class="b off" aria-label="Check Box"><svg><use href="#check"/></svg></button>
			<button type="button" class="b off" aria-label="Text Box"><svg><use href="#abl"/></svg></button>
			<button type="button" class="b off" aria-label="Command Button"><svg><use href="#cmd"/></svg></button>
			<button type="button" class="b off" aria-label="Option Button"><svg><use href="#radio"/></svg></button>
			<button type="button" class="b off" aria-label="List Box"><svg><use href="#list"/></svg></button>
			<button type="button" class="b off" aria-label="Combo Box"><svg><use href="#combo"/></svg></button>
			<button type="button" class="b off" aria-label="Combo List"><svg><use href="#combo"/></svg></button>
			<button type="button" class="b off" aria-label="Toggle Button"><svg><use href="#toggle"/></svg></button>
			<button type="button" class="b off" aria-label="Spin Button"><svg><use href="#spin"/></svg></button>
			<button type="button" class="b off" aria-label="Scroll Bar"><svg><use href="#scroll"/></svg></button>
			<button type="button" class="b off ser big">A</button>
			<button type="button" class="b off" aria-label="Image"><svg><use href="#pic"/></svg></button>
			<i class="sep"></i>
			<button type="button" class="b off" aria-label="More Controls"><svg><use href="#tools"/></svg></button>
			<button type="button" class="more" aria-label="Toolbar options"></button>
		</div>
		<div class="bar">
			<i class="grip"></i>
			<button type="button" class="b off ser"><em><b>Aa</b></em></button>
			<button type="button" class="b off abl">ab|</button>
			<i class="sep"></i>
			<button type="button" class="b off" aria-label="Group Box"><svg><use href="#xyz"/></svg></button>
			<button type="button" class="b off" aria-label="Button"><svg><use href="#cmd"/></svg></button>
			<i class="sep"></i>
			<button type="button" class="b off" aria-label="Check Box"><svg><use href="#check"/></svg></button>
			<button type="button" class="b off" aria-label="Option Button"><svg><use href="#radio"/></svg></button>
			<i class="sep"></i>
			<button type="button" class="b off" aria-label="List Box"><svg><use href="#list"/></svg></button>
			<button type="button" class="b off" aria-label="Combo Box"><svg><use href="#combo"/></svg></button>
			<i class="sep"></i>
			<button type="button" class="b off" aria-label="Combination List"><svg><use href="#list"/></svg></button>
			<button type="button" class="b off" aria-label="Combination Drop-Down"><svg><use href="#combo"/></svg></button>
			<i class="sep"></i>
			<button type="button" class="b off" aria-label="Scroll Bar"><svg><use href="#scroll"/></svg></button>
			<button type="button" class="b off" aria-label="Spinner"><svg><use href="#spin"/></svg></button>
			<i class="sep"></i>
			<button type="button" class="b off" aria-label="Control Properties"><svg><use href="#propoff"/></svg></button>
			<button type="button" class="b off" aria-label="Edit Code"><svg><use href="#code"/></svg></button>
			<i class="sep"></i>
			<button type="button" class="b on dark" aria-label="Toggle Grid"><svg><use href="#dots"/></svg></button>
			<button type="button" class="b off" aria-label="Run Dialog"><svg><use href="#run"/></svg></button>
			<button type="button" class="more" aria-label="Toolbar options"></button>
		</div>
	</div>

	<!-- add-ins -->
	<div class="row">
		<div class="bar">
			<i class="grip"></i>
			<button type="button" class="txt"><svg><use href="#addin"/></svg>Open Add-in</button>
			<i class="sep"></i>
			<button type="button" class="b" aria-label="Workbook"><svg><use href="#book"/></svg></button>
			<button type="button" class="b" aria-label="Go To"><svg><use href="#goto"/></svg></button>
			<i class="sep"></i>
			<button type="button" class="b" aria-label="Windows"><svg><use href="#wins"/></svg></button>
			<button type="button" class="b" aria-label="Autofit"><svg><use href="#autofit"/></svg></button>
			<button type="button" class="b" aria-label="Highlight"><svg><use href="#torch"/></svg></button>
			<i class="sep"></i>
			<button type="button" class="b" aria-label="Unprotect"><svg><use href="#unlock"/></svg></button>
			<button type="button" class="b" aria-label="Protect"><svg><use href="#lock"/></svg></button>
			<i class="sep"></i>
			<button type="button" class="txt tight"><svg><use href="#sheet"/></svg>Unhide All Sheets</button>
			<button type="button" class="txt tight"><svg><use href="#sheet2"/></svg>Rehide Sheets</button>
			<i class="sep"></i>
			<button type="button" class="b" aria-label="About"><svg><use href="#qm"/></svg></button>
			<i class="sep"></i>
			<button type="button" class="b" aria-label="Select Cell"><svg><use href="#cell"/></svg></button>
			<button type="button" class="b" aria-label="Quick Grid"><svg><use href="#qgrid"/></svg></button>
			<button type="button" class="b" aria-label="Sign"><svg><use href="#sign"/></svg></button>
			<button type="button" class="b" aria-label="Clipboard"><svg><use href="#clip"/></svg></button>
			<button type="button" class="b" aria-label="Green Grid"><svg><use href="#ggrid"/></svg></button>
			<button type="button" class="more" aria-label="Toolbar options"></button>
		</div>
		<div class="bar">
			<i class="grip"></i>
			<button type="button" class="txt tight"><svg><use href="#pdf"/></svg>Save as PDF</button>
			<button type="button" class="more" aria-label="Toolbar options"></button>
		</div>
	</div>

	<!-- formula bar -->
	<div class="formula">
		<input type="text" class="namebox" aria-label="Name Box" value="L14" />
		<button type="button" class="dd" aria-label="Names"></button>
		<button type="button" class="fx" aria-label="Insert Function"><em>f<small>x</small></em></button>
		<input type="text" class="fxbox" aria-label="Formula" />
	</div>

	<!-- sheet -->
	<div class="sheet">
		<div class="cells">
			<table>
				<colgroup>
					<col class="ch"><col class="ca"><col class="cb"><col class="cc"><col class="cd"><col class="ce"><col class="cf"><col class="cf"><col class="chh"><col class="ci"><col class="ce"><col class="chh"><col class="cl"><col class="cm"><col class="cn"><col class="co"><col class="cp"><col class="cq">
				</colgroup>
				<thead>
					<tr><th></th><th>A</th><th>B</th><th>C</th><th>D</th><th>E</th><th>F</th><th>G</th><th>H</th><th>I</th><th>J</th><th>K</th><th class="sel">L</th><th>M</th><th>N</th><th>O</th><th>P</th><th>Q</th></tr>
				</thead>
				<tbody>
					<tr class="r22 ln"><th>22</th><td>Sl.<br />No.</td><td>Deductee<br />reference<br />number<br />provided<br />by the<br />deductor,<br />if<br />available</td><td>PAN of the<br />employee</td><td>Name of the<br />Employee</td><td>Section<br />Code</td><td>Date of<br />payment/<br />credit</td><td>Date of<br />deduction(d<br />d/mm/yyyy)</td><td>Amount<br />Paid<br />Credited</td><td>Tax</td><td>Educatio<br />nal Cess<br />Rs.</td><td>Total<br />TDS(Total<br />of col<br />321+322)</td><td colspan="2">Total TDS Deposited</td><td>Date of<br />Deposit</td><td>Reason<br />for non-<br />deductio<br />n/lower<br />deductio<br />n*</td><td>Number of<br />certificateu/s<br />197 issued by<br />the Assessing<br />Officer for non-<br />deduction/lower<br />deduction</td></tr>
					<tr class="r23 ln"><th>23</th><td>412</td><td>413</td><td>414</td><td>415</td><td>416</td><td>417</td><td>418</td><td>419</td><td>420</td><td>421</td><td>422</td><td colspan="2">423</td><td>424</td><td>425</td><td>426</td></tr>
					<tr class="r40"><th>24</th><td>1</td><td class="n">1</td><td>APPKE1235A</td><td rowspan="3" class="bb">Pranab banerjee</td><td rowspan="3" class="bb">92B</td><td>4/4</td><td>4/4</td><td class="n">93,250</td><td class="n">2,652</td><td class="n">77</td><td class="n">2,729</td><td class="n">600</td><td class="n">200</td><td>4/4</td><td class="n">-</td><td></td></tr>
					<tr class="r40"><th>25</th><td></td><td></td><td></td><td>4/5</td><td>4/5</td><td></td><td></td><td></td><td></td><td></td><td class="n">200</td><td>4/5</td><td></td><td></td></tr>
					<tr class="r40 ln"><th>26</th><td></td><td></td><td></td><td>4/6</td><td>4/6</td><td></td><td></td><td></td><td></td><td></td><td class="n">200</td><td>4/6</td><td></td><td></td></tr>
					<tr class="r37"><th>27</th><td>2</td><td class="n">2</td><td class="n">101</td><td rowspan="3" class="bb">Hariharan<br />Mahato</td><td rowspan="3" class="bb">92B</td><td>4/4</td><td>4/4</td><td class="n">(37,500)</td><td class="n">-</td><td class="n">-</td><td class="n">-</td><td class="n">-</td><td class="n">-</td><td>4/4</td><td class="n">-</td><td></td></tr>
					<tr class="r37"><th>28</th><td></td><td></td><td></td><td>4/5</td><td>4/5</td><td></td><td></td><td></td><td></td><td></td><td class="n">-</td><td>4/5</td><td></td><td></td></tr>
					<tr class="r37 ln"><th>29</th><td></td><td></td><td></td><td>4/6</td><td>4/6</td><td></td><td></td><td></td><td></td><td></td><td class="n">-</td><td>4/6</td><td></td><td></td></tr>
					<tr class="r37"><th>30</th><td>3</td><td class="n">3</td><td class="n">3</td><td rowspan="3" class="bb n">3</td><td rowspan="3" class="bb">92B</td><td>4/4</td><td>4/4</td><td class="n">-</td><td class="n">-</td><td class="n">-</td><td class="n">-</td><td class="n">-</td><td class="n">-</td><td>4/4</td><td class="n">-</td><td></td></tr>
					<tr class="r37"><th>31</th><td></td><td></td><td></td><td>4/5</td><td>4/5</td><td></td><td></td><td></td><td></td><td></td><td class="n">-</td><td>4/5</td><td></td><td></td></tr>
					<tr class="r37 ln"><th>32</th><td></td><td></td><td></td><td>4/6</td><td>4/6</td><td></td><td></td><td></td><td></td><td></td><td></td><td>4/6</td><td></td><td></td></tr>
				</tbody>
			</table>
		</div>
		<div class="vscroll">
			<i class="split"></i>
			<button type="button" class="up" aria-label="Scroll up"></button>
			<div class="vtrack"><i class="vthumb"></i></div>
			<button type="button" class="down" aria-label="Scroll down"></button>
		</div>
	</div>

	<!-- sheet tabs -->
	<div class="tabbar">
		<div class="nav">
			<button type="button" aria-label="First sheet"><svg width="8" height="8"><path d="M1 0v8" stroke="#000" stroke-width="1.500"/><path d="M7 0v8L3 4z"/></svg></button>
			<button type="button" aria-label="Previous sheet"><svg width="8" height="8"><path d="M6 0v8L2 4z"/></svg></button>
			<button type="button" aria-label="Next sheet"><svg width="8" height="8"><path d="M2 0v8l4-4z"/></svg></button>
			<button type="button" aria-label="Last sheet"><svg width="8" height="8"><path d="M7 0v8" stroke="#000" stroke-width="1.500"/><path d="M1 0v8l4-4z"/></svg></button>
		</div>
		<div class="tabs">
			<button type="button" class="tab">32</button><button type="button" class="tab">33</button><button type="button" class="tab">34</button><button type="button" class="tab">35</button><button type="button" class="tab">36</button><button type="button" class="tab">37</button><button type="button" class="tab">38</button><button type="button" class="tab">39</button><button type="button" class="tab">40</button><button type="button" class="tab">41</button><button type="button" class="tab">42</button><button type="button" class="tab">43</button><button type="button" class="tab">44</button><button type="button" class="tab">45</button><button type="button" class="tab">46</button><button type="button" class="tab">47</button><button type="button" class="tab">48</button><button type="button" class="tab">49</button><button type="button" class="tab">50</button><button type="button" class="tab red">Deductor's Sheet (2)</button><button type="button" class="tab peach">24Q &amp; 26Q &nbsp;(1st Qr)</button><button type="button" class="tab cur">24Q &amp; 26Q 1st Q Annex-I</button><button type="button" class="tab cyan">24Q</button>
		</div>
		<div class="hscroll">
			<i class="hsplit"></i>
			<button type="button" class="left" aria-label="Scroll left"></button>
			<div class="htrack"><i class="hthumb"></i></div>
			<button type="button" class="right" aria-label="Scroll right"></button>
			<i class="hsplit"></i>
		</div>
		<svg class="sizer"><path d="M11 6h2v2h-2zM7 10h2v2H7zM11 10h2v2h-2zM3 14h2v2H3zM7 14h2v2H7zM11 14h2v2h-2z" fill="#b8b8b8"/></svg>
	</div>

	<!-- drawing -->
	<div class="row drawrow">
		<div class="bar">
			<i class="grip"></i>
			<button type="button" class="txt arr"><span>D<u>r</u>aw</span></button>
			<button type="button" class="b off" aria-label="Select Objects"><svg><use href="#ptr"/></svg></button>
			<i class="sep"></i>
			<button type="button" class="txt arr"><span>A<u>u</u>toShapes</span></button>
			<button type="button" class="b off" aria-label="Line"><svg><use href="#line"/></svg></button>
			<button type="button" class="b off" aria-label="Arrow"><svg><use href="#arrow"/></svg></button>
			<button type="button" class="b off" aria-label="Rectangle"><svg><use href="#rect"/></svg></button>
			<button type="button" class="b off" aria-label="Oval"><svg><use href="#oval"/></svg></button>
			<button type="button" class="b off" aria-label="Text Box"><svg><use href="#tbox"/></svg></button>
			<button type="button" class="b off" aria-label="WordArt"><svg><use href="#wart"/></svg></button>
			<button type="button" class="b off" aria-label="Diagram"><svg><use href="#diag"/></svg></button>
			<button type="button" class="b off" aria-label="Clip Art"><svg><use href="#clipart"/></svg></button>
			<button type="button" class="b off" aria-label="Picture"><svg><use href="#pic"/></svg></button>
			<i class="sep"></i>
			<button type="button" class="b" aria-label="Fill Color"><svg><use href="#fill"/></svg></button>
			<button type="button" class="dd" aria-label="Fill options"></button>
			<button type="button" class="b" aria-label="Line Color"><svg><use href="#lcolor"/></svg></button>
			<button type="button" class="dd" aria-label="Line options"></button>
			<button type="button" class="b" aria-label="Font Color"><svg><use href="#fcolor"/></svg></button>
			<button type="button" class="dd" aria-label="Font color options"></button>
			<button type="button" class="b" aria-label="Line Style"><svg><use href="#lw"/></svg></button>
			<button type="button" class="b" aria-label="Dash Style"><svg><use href="#dash"/></svg></button>
			<button type="button" class="b" aria-label="Arrow Style"><svg><use href="#arrows"/></svg></button>
			<button type="button" class="b" aria-label="Shadow"><svg><use href="#shadow"/></svg></button>
			<button type="button" class="b" aria-label="3-D"><svg><use href="#cube"/></svg></button>
			<button type="button" class="more" aria-label="Toolbar options"></button>
		</div>
	</div>

	<div class="status">
		<span class="ready">Ready</span>
		<span class="pane p1"></span><span class="pane p2"></span><span class="pane p3"></span><span class="pane p4"></span><span class="pane p3">NUM</span><span class="pane p4"></span><span class="pane p3"></span><span class="pane p5"></span>
	</div>
</div>

<div class="taskbar">
	<button type="button" class="orb" aria-label="Start"><svg><use href="#start"/></svg></button>
	<button type="button" class="task" aria-label="Internet Explorer"><svg><use href="#ie"/></svg></button>
	<button type="button" class="task" aria-label="Windows Explorer"><svg><use href="#expl"/></svg></button>
	<button type="button" class="task open" aria-label="Firefox"><svg><use href="#fox"/></svg></button>
	<button type="button" class="task wmp" aria-label="Media Player"><svg><use href="#wmp"/></svg></button>
	<button type="button" class="task" aria-label="Winamp"><svg><use href="#amp"/></svg></button>
	<button type="button" class="task open" aria-label="Chrome"><svg><use href="#chrome"/></svg></button>
	<button type="button" class="task open front" aria-label="Excel"><svg><use href="#xl"/></svg></button>
	<div class="tray">
		<svg><use href="#kas"/></svg>
		<svg><use href="#vol"/></svg>
		<svg><use href="#gdot"/></svg>
		<svg><use href="#net"/></svg>
	</div>
	<div class="clock">7:49 PM<br />13-Jul-15</div>
	<button type="button" class="desk" aria-label="Show desktop"></button>
</div>
</body>
</html>
```
FILE: styles.css
```
*{
	box-sizing:border-box;
}
html,body{
	margin:0;
	padding:0;
	height:100%;
}
body{
	display:flex;
	flex-direction:column;
	overflow:hidden;
	font-family:"Open Sans","Noto Sans",sans-serif;
	font-size:12px;
	line-height:16px;
	color:#000;
}
button,input,select{
	font:inherit;
	color:inherit;
	margin:0;
	padding:0;
	border:0;
	border-radius:0;
	background:none;
}
button{
	display:flex;
	align-items:center;
	justify-content:center;
	flex:none;
	white-space:nowrap;
}
i{
	display:block;
	flex:none;
}
.sprite{
	display:none;
}
.grads{
	position:absolute;
	width:0;
	height:0;
}
.app{
	flex:1;
	min-height:0;
	display:flex;
	flex-direction:column;
	background:linear-gradient(90deg,#9ebef5,#c4dafa 50%);
}

/* title */
.title{
	flex:none;
	height:22px;
	display:flex;
	align-items:center;
	background:
		radial-gradient(ellipse 30px 14px at 487px 18px,rgba(205,225,242,.7) 50%,transparent),
		radial-gradient(ellipse 28px 14px at 562px 20px,rgba(170,200,235,.7) 30%,transparent),
		radial-gradient(ellipse 28px 14px at 638px 20px,rgba(170,200,235,.7) 30%,transparent),
		radial-gradient(ellipse 28px 14px at 712px 20px,rgba(180,215,230,.7) 30%,transparent),
		linear-gradient(90deg,#8fb0d0,#9dbbd6 400px,#1f5590 480px,#1c4f8c 800px,#17447a 1000px,#245a94 1250px,#4a7bb0);
	border-bottom:1px solid #14305a;
	box-shadow:inset 0 -1px 0 #b8cfe8;
}
.title .ico{
	width:16px;
	height:16px;
}
.title h1{
	flex:1;
	margin:0 0 0 5px;
	font-size:12px;
	font-weight:normal;
	white-space:nowrap;
	text-shadow:0 0 5px #fff,0 0 8px #fff,0 0 10px #dfeefa;
}
.winbtns{
	display:flex;
	align-self:flex-start;
	height:18px;
	margin-right:3px;
	border:1px solid #c9d9ea;
	border-top:0;
	border-radius:0 0 5px 5px;
	overflow:hidden;
	background:linear-gradient(#a9bccf,#7e98b5 45%,#3c5c82 50%,#7895b8);
}
.winbtns button{
	width:28px;
	border-right:1px solid #20344f;
}
.winbtns .close{
	width:46px;
	border:0;
	background:linear-gradient(#dd9d8e,#c96550 45%,#ac2c14 50%,#d8694a);
}

/* menu */
.menu{
	flex:none;
	height:26px;
	display:flex;
	align-items:center;
	padding:0 4px 0 2px;
}
.menu>button{
	height:20px;
	padding:0 8px;
}
.menu>button:nth-of-type(n+3){
	padding:0 7px 0 8px;
}
.docico{
	width:18px;
	height:18px;
	margin:0 1px;
}
.ask{
	display:flex;
	width:178px;
	height:20px;
	margin-left:auto;
	background:#fff;
	padding:1px;
}
.ask input{
	flex:1;
	min-width:0;
	padding:0 0 2px 3px;
}
.ask input::placeholder{
	color:#808080;
	opacity:1;
}
.askdd{
	width:11px;
	background:#c4dafa;
}
.docbtns{
	display:flex;
	gap:9px;
	padding-left:4px;
}
.docbtns button{
	width:10px;
	height:16px;
}

/* toolbars */
.row{
	flex:none;
	height:26px;
	display:flex;
	align-items:center;
	gap:4px;
	padding-left:2px;
}
.row.indent{
	padding-left:13px;
}
.bar{
	display:flex;
	align-items:center;
	height:25px;
	background:linear-gradient(#dfebfe,#c9defc 45%,#aac8f6 75%,#85aaec);
	border-bottom:1px solid #3f65ad;
	border-radius:3px;
}
.grip{
	width:6px;
	height:15px;
	background:linear-gradient(#27418a 2px,transparent 2px) 3px 0/2px 4px repeat-y;
}
.sep{
	width:6px;
	height:16px;
	background:linear-gradient(90deg,transparent 2px,#6a8ccb 2px,#6a8ccb 3px,#fff 3px,#fff 4px,transparent 4px);
}
.b{
	width:23px;
	height:22px;
}
.b svg,.txt svg{
	width:16px;
	height:16px;
	flex:none;
	font-family:"Liberation Sans",sans-serif;
}
.off{
	color:#8292b8;
}
.on{
	background:linear-gradient(#fcc88e,#fbb165);
	border:1px solid #b98a4d;
}
.on.dark{
	border-color:#0a1566;
}
.ser{
	font-family:"Liberation Serif",serif;
	font-weight:bold;
	font-size:14px;
	color:#6a7aa6;
}
.big{
	font-size:20px;
	font-weight:normal;
}
.sigma{
	font-family:"Liberation Serif",serif;
	font-size:16px;
	color:#5c6c98;
}
.abl{
	font-family:"Liberation Sans",sans-serif;
	font-weight:bold;
}
.txt{
	gap:3px;
	height:22px;
	padding:0 3px 0 4px;
}
.tight{
	padding:0 1px;
}
.inword{
	padding:0 2px 0 21px;
}
.dd{
	width:11px;
	height:22px;
}
.dd::before,.askdd::before,.combo::after,.arr::after{
	content:"";
	border:3px solid transparent;
	border-top-color:#000;
	border-bottom:0;
}
.dd.off::before{
	border-top-color:#8090b5;
}
.combo{
	position:relative;
	display:flex;
	height:21px;
	background:#fff;
	padding:1px;
}
.combo select{
	flex:1;
	min-width:0;
	appearance:none;
	padding:0 0 2px 2px;
	background:linear-gradient(#d6e6fd,#a5c4f4) right/11px 100% no-repeat;
}
.combo::after{
	position:absolute;
	right:3px;
	top:9px;
	pointer-events:none;
}
.fontsel{
	width:151px;
	margin:0 2px;
}
.sizesel{
	width:46px;
	margin-right:1px;
}
.zoomsel{
	width:69px;
}
.more{
	align-self:stretch;
	align-items:flex-end;
	width:12px;
	margin:0 0 -1px 3px;
	border-radius:0 3px 3px 0;
	background:linear-gradient(#6c9be8,#3a6fcc 50%,#0b3a92);
}
.more::before{
	content:"";
	width:7px;
	height:7px;
	margin-bottom:4px;
	background:#fff;
	clip-path:polygon(0 0,100% 0,100% 1px,0 1px,0 3px,100% 3px,50% 100%,0 3px);
}

/* formula bar */
.formula{
	flex:none;
	height:17px;
	display:flex;
	padding-left:2px;
}
.formula .dd{
	width:14px;
	height:17px;
}
.namebox{
	width:95px;
	background:#fff;
	text-align:center;
}
.fx{
	width:58px;
	justify-content:flex-end;
	padding-right:3px;
	font-family:"Liberation Serif",serif;
	font-size:14px;
	font-weight:bold;
}
.fx small{
	font-size:11px;
}
.fxbox{
	flex:1;
	min-width:0;
	background:#fff;
}

/* grid */
.sheet{
	flex:1;
	min-height:0;
	display:flex;
	border-top:2px solid #7d7f78;
	border-left:2px solid #8f9498;
	background:#c0c0c0;
}
.cells{
	flex:1;
	min-width:0;
	overflow:hidden;
}
table{
	table-layout:fixed;
	width:1317px;
	border-collapse:separate;
	border-spacing:0;
	font-family:"Liberation Sans",Arial,sans-serif;
	font-size:12px;
}
.ch{width:26px;}
.ca{width:36px;}
.cb{width:64px;}
.cc{width:97px;}
.cd{width:106px;}
.ce{width:54px;}
.cf{width:74px;}
.chh{width:71px;}
.ci{width:63px;}
.cl{width:73px;}
.cm{width:70px;}
.cn{width:75px;}
.co{width:56px;}
.cp{width:96px;}
.cq{width:157px;}
th{
	padding:0;
	background:#eeebdf;
	border-right:1px solid #8b8875;
	border-bottom:1px solid #8b8875;
	font-size:13px;
	font-weight:normal;
}
thead th{
	height:17px;
	line-height:16px;
}
thead .sel{
	background:#fbbf6f;
	border-color:#b07a34;
}
tbody th{
	vertical-align:bottom;
	line-height:15px;
}
td{
	padding:0;
	background:#fff;
	border-right:1px solid #000;
	font-weight:bold;
	text-align:center;
	vertical-align:middle;
	white-space:nowrap;
}
.ln td,td.bb{
	border-bottom:1px solid #000;
}
td.n{
	text-align:right;
	padding-right:4px;
}
.r22{height:136px;}
.r23{height:17px;}
.r40{height:40px;}
.r37{height:37px;}

/* scrollbars */
.vscroll{
	width:18px;
	display:flex;
	flex-direction:column;
	background:#f0f0f0;
	border-left:1px solid #fff;
}
.split{
	height:9px;
	background:#f4f4f4;
	border-top:1px solid #fff;
	border-bottom:2px solid #000;
}
.vscroll button,.hscroll button{
	width:17px;
	height:17px;
}
.up::before,.down::before,.left::before,.right::before{
	content:"";
	border:4px solid transparent;
}
.up::before{
	border-top:0;
	border-bottom-color:#444;
}
.down::before{
	border-bottom:0;
	border-top-color:#444;
}
.left::before{
	border-left:0;
	border-right-color:#333;
}
.right::before{
	border-right:0;
	border-left-color:#333;
}
.vtrack{
	flex:1;
	padding:45px 1px 0;
}
.vthumb{
	height:56px;
	border:1px solid #979797;
	border-radius:2px;
	background:
		repeating-linear-gradient(#555 0,#555 1px,transparent 1px,transparent 3px) center/7px 7px no-repeat,
		linear-gradient(90deg,#f5f5f5,#e6e6e6 45%,#cfcfd2 50%,#dcdcdf);
}

/* tabs */
.tabbar{
	flex:none;
	height:19px;
	display:flex;
	background:#f0f0f0;
	border-bottom:2px solid #fff;
	font-family:"DejaVu Sans Condensed","DejaVu Sans",sans-serif;
}
.nav{
	display:flex;
	align-items:center;
	width:67px;
	border-top:1px solid #999;
	border-right:1px solid #999;
}
.nav button{
	flex:1;
}
.tabs{
	flex:1;
	min-width:0;
	display:flex;
	overflow:hidden;
	padding-left:3px;
	background:#fff;
	border-top:1px solid #888;
}
.tab{
	position:relative;
	z-index:0;
	width:28px;
	height:16px;
	color:#fff;
}
.tab::before{
	content:"";
	position:absolute;
	z-index:-1;
	top:0;
	bottom:0;
	left:2px;
	right:0;
	background:#993366;
	border-right:1px solid #333;
	transform:skewX(-26deg);
}
.tab.red{
	width:140px;
}
.tab.red::before{
	background:#ff0000;
}
.tab.peach{
	width:132px;
	color:#222;
}
.tab.peach::before{
	background:#ffcc99;
}
.tab.cur{
	width:174px;
	color:#000;
	font-weight:bold;
	border-bottom:1px solid #f5b57c;
}
.tab.cur::before{
	background:#fff;
}
.tab.cyan{
	width:40px;
	color:#222;
}
.tab.cyan::before{
	background:#00ffff;
}
.hscroll{
	display:flex;
	width:285px;
}
.hsplit{
	width:7px;
	background:#f4f4f4;
	border-left:1px solid #fff;
	border-right:2px solid #000;
}
.htrack{
	flex:1;
	padding:1px 2px;
}
.hthumb{
	height:14px;
	border:1px solid #979797;
	border-radius:2px;
	background:
		repeating-linear-gradient(90deg,#555 0,#555 1px,transparent 1px,transparent 3px) center/9px 6px no-repeat,
		linear-gradient(#f5f5f5,#e6e6e6 45%,#cfcfd2 50%,#dcdcdf);
}
.sizer{
	flex:none;
	width:17px;
	height:17px;
}
.drawrow{
	height:27px;
}
.arr{
	gap:3px;
}

/* status */
.status{
	flex:none;
	height:18px;
	display:flex;
	gap:2px;
	padding:2px 3px 1px 4px;
	background:#f0f0f0;
	line-height:15px;
	font-family:"DejaVu Sans Condensed","DejaVu Sans",sans-serif;
	font-size:11px;
}
.ready{
	flex:1;
	font-size:12px;
}
.pane{
	border:1px solid #d0d0d0;
	line-height:13px;
	text-align:center;
}
.p1{width:34px;}
.p2{width:111px;}
.p3{width:26px;}
.p4{width:28px;}
.p5{width:20px;}

/* taskbar */
.taskbar{
	flex:none;
	height:40px;
	display:flex;
	align-items:center;
	padding-left:2px;
	border-top:1px solid #16355c;
	box-shadow:inset 0 1px 0 #8fc0e2;
	background:
		linear-gradient(28deg,transparent 38%,rgba(170,215,250,.8) 50%,transparent 58%) 900px 0/90px 40px no-repeat,
		linear-gradient(90deg,#26688f 0,#3483b4 100px,#4ba3d3 200px,#4ca5d8 500px,#3a93d0 750px,#2577bd 920px,#1d5fa8 1080px,#1b4a82 1160px,#123561);
}
.orb{
	width:50px;
	margin-right:7px;
}
.orb svg{
	width:38px;
	height:38px;
}
.task{
	width:59px;
	height:38px;
	margin-right:3px;
	border:1px solid transparent;
	border-radius:3px;
}
.task svg{
	width:30px;
	height:30px;
}
.task.wmp svg{
	width:27px;
	height:27px;
}
.task.open{
	border-color:#cfe8f6;
	background:linear-gradient(135deg,rgba(255,255,255,.45),rgba(255,255,255,.1));
	box-shadow:0 0 0 1px #27587e;
}
.task.front{
	background:linear-gradient(135deg,rgba(255,255,255,.85),rgba(255,255,255,.4));
}
.task.front svg{
	width:28px;
	height:28px;
}
.tray{
	display:flex;
	gap:8px;
	margin-left:auto;
	padding-right:22px;
}
.tray svg{
	width:16px;
	height:16px;
}
.clock{
	color:#fff;
	text-align:center;
	line-height:17px;
	margin-right:16px;
}
.desk{
	width:14px;
	height:38px;
	border:1px solid #6c8db0;
	background:linear-gradient(135deg,#5a7fa8,#14355f 50%);
}
```
